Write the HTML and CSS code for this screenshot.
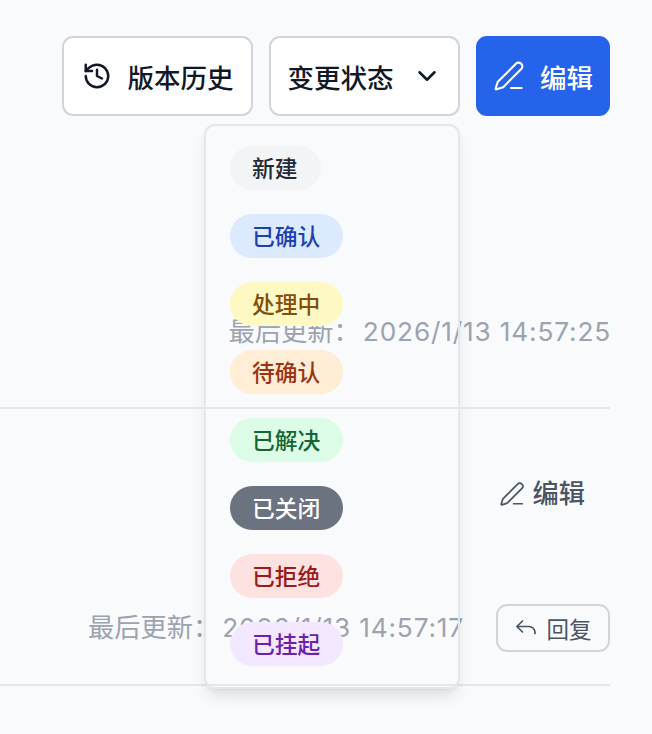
FILE: index.html
```html
<!DOCTYPE html>
<html lang="zh-CN">
<head>
    <meta charset="UTF-8">
    <title>变更详情</title>
    <link rel="stylesheet" href="styles.css">
</head>
<body>
<div class="page">
    <section class="issue">
        <div class="actions">
            <button class="btn btn-history">
                <svg class="icon icon-history" viewBox="0 0 24 24">
                    <path d="M3 12a9 9 0 1 0 9-9 9.75 9.75 0 0 0-6.74 2.74L3 8"></path>
                    <path d="M3 3v5h5"></path>
                    <path d="M12 7v5l4 2"></path>
                </svg>
                版本历史
            </button>
            <div class="status-menu">
                <button class="btn btn-status">
                    变更状态
                    <svg class="icon icon-chevron" viewBox="0 0 24 24">
                        <path d="m6 9 6 6 6-6"></path>
                    </svg>
                </button>
                <ul class="dropdown">
                    <li><span class="badge badge-new">新建</span></li>
                    <li><span class="badge badge-confirmed">已确认</span></li>
                    <li><span class="badge badge-progress">处理中</span></li>
                    <li><span class="badge badge-pending">待确认</span></li>
                    <li><span class="badge badge-resolved">已解决</span></li>
                    <li><span class="badge badge-closed">已关闭</span></li>
                    <li><span class="badge badge-rejected">已拒绝</span></li>
                    <li><span class="badge badge-suspended">已挂起</span></li>
                </ul>
            </div>
            <button class="btn btn-primary">
                <svg class="icon icon-pen" viewBox="0 0 24 24">
                    <path d="M13.5 21h8"></path>
                    <path d="M21.174 6.812a1 1 0 0 0-3.986-3.987L3.842 16.174a2 2 0 0 0-.5.83l-1.321 4.352a.5.5 0 0 0 .623.622l4.353-1.32a2 2 0 0 0 .83-.497z"></path>
                </svg>
                编辑
            </button>
        </div>
        <p class="updated">最后更新：<span class="time">2026/1/13 14:57:25</span></p>
    </section>
    <section class="comment">
        <div class="comment-top">
            <button class="link-btn">
                <svg class="icon icon-pen-small" viewBox="0 0 24 24">
                    <path d="M13.5 21h8"></path>
                    <path d="M21.174 6.812a1 1 0 0 0-3.986-3.987L3.842 16.174a2 2 0 0 0-.5.83l-1.321 4.352a.5.5 0 0 0 .623.622l4.353-1.32a2 2 0 0 0 .83-.497z"></path>
                </svg>
                编辑
            </button>
        </div>
        <div class="comment-bottom">
            <p class="updated">最后更新：<span class="time">2026/1/13 14:57:17</span></p>
            <button class="reply-btn">
                <svg class="icon icon-reply" viewBox="0 0 24 24">
                    <path d="m8.5 5-5.5 5.5 5.5 5.5"></path>
                    <path d="M3 10.5h12a6 6 0 0 1 6 6v1"></path>
                </svg>
                回复
            </button>
        </div>
    </section>
</div>
</body>
</html>
```

FILE: styles.css
```css
* {
    box-sizing: border-box;
}

body {
    margin: 0;
    background-color: #f9fafb;
    color: #111827;
    font-family: Inter, "Noto Sans CJK SC", sans-serif;
}

.page {
    height: 734px;
    padding-right: 42px;
    overflow: hidden;
}

.icon {
    flex: none;
    fill: none;
    stroke: currentColor;
    stroke-width: 2;
    stroke-linecap: round;
    stroke-linejoin: round;
}

.issue {
    height: 409px;
    padding-top: 36px;
    border-bottom: 2px solid #e5e7eb;
}

.actions {
    display: flex;
    justify-content: flex-end;
    gap: 16px;
}

.btn {
    display: flex;
    align-items: center;
    justify-content: center;
    gap: 16px;
    height: 80px;
    padding: 0 17px;
    border: 2px solid #d1d5db;
    border-radius: 11px;
    background-color: #fff;
    color: #111827;
    font: inherit;
    font-size: 26.5px;
    font-weight: 500;
    white-space: nowrap;
}

.btn-history {
    width: 191px;
}

.btn-status {
    gap: 18px;
    width: 191px;
}

.btn-primary {
    gap: 15px;
    width: 134px;
    padding: 0;
    border-color: #2563eb;
    background-color: #2563eb;
    color: #fff;
}

.icon-history {
    width: 30px;
    height: 30px;
}

.icon-chevron {
    width: 30px;
    height: 30px;
}

.icon-pen {
    width: 32px;
    height: 32px;
    stroke-width: 1.6;
}

.status-menu {
    position: relative;
}

.dropdown {
    position: absolute;
    z-index: 2;
    top: 88px;
    right: 0;
    width: 256px;
    height: 565px;
    margin: 0;
    padding: 20px 24px;
    list-style: none;
    border: 2px solid #e2e8f0;
    border-radius: 11px;
    box-shadow: 0 10px 15px -3px rgba(0, 0, 0, 0.1), 0 4px 6px -4px rgba(0, 0, 0, 0.1);
}

.dropdown li {
    display: flex;
    height: 44px;
    margin-bottom: 24px;
}

.badge {
    padding: 1px 23px 0 22px;
    border-radius: 22px;
    font-size: 22.75px;
    font-weight: 500;
    line-height: 43px;
    white-space: nowrap;
}

.badge-new {
    background-color: #f3f4f6;
    color: #1f2937;
}

.badge-confirmed {
    background-color: #dbeafe;
    color: #1e40af;
}

.badge-progress {
    background-color: #fef9c3;
    color: #854d0e;
}

.badge-pending {
    background-color: #ffedd5;
    color: #9a3412;
}

.badge-resolved {
    background-color: #dcfce7;
    color: #166534;
}

.badge-closed {
    background-color: #6b7280;
    color: #fff;
}

.badge-rejected {
    background-color: #fee2e2;
    color: #991b1b;
}

.badge-suspended {
    background-color: #f3e8ff;
    color: #6b21a8;
}

.updated {
    margin: 0;
    color: #9ca3af;
    font-size: 26.25px;
    line-height: 36px;
    white-space: nowrap;
}

.time {
    margin-right: -1px;
    margin-left: 3px;
    letter-spacing: 0.82px;
}

.issue .updated {
    margin-top: 198px;
    text-align: right;
}

.comment {
    height: 277px;
    border-bottom: 2px solid #e5e7eb;
}

.comment-top {
    display: flex;
    justify-content: flex-end;
    padding-top: 67px;
    padding-right: 25px;
}

.link-btn {
    display: flex;
    align-items: center;
    gap: 8px;
    padding: 0;
    border: 0;
    background: none;
    color: #4b5563;
    font: inherit;
    font-size: 26.25px;
    font-weight: 500;
    line-height: 36px;
}

.icon-pen-small {
    width: 26px;
    height: 26px;
    stroke-width: 1.6;
}

.comment-bottom {
    display: flex;
    align-items: center;
    justify-content: flex-end;
    gap: 33px;
    margin-top: 92px;
}

.reply-btn {
    display: flex;
    align-items: center;
    justify-content: center;
    gap: 8px;
    width: 114px;
    height: 48px;
    padding: 0;
    border: 2px solid #d1d5db;
    border-radius: 11px;
    background: none;
    color: #4b5563;
    font: inherit;
    font-size: 22.5px;
    font-weight: 400;
}

.icon-reply {
    width: 24px;
    height: 24px;
    stroke-width: 1.7;
}
```
